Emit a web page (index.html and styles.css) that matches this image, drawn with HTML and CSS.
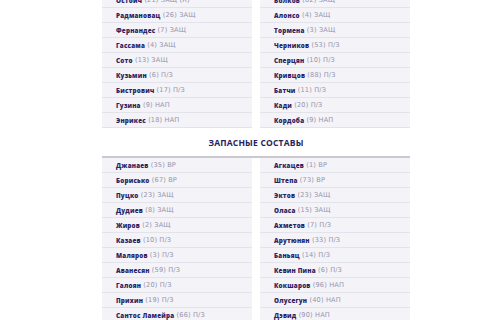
FILE: index.html
```html
<!DOCTYPE html>
<html lang="ru">
<head>
<meta charset="utf-8">
<link rel="stylesheet" href="styles.css">
</head>
<body>
<main class="page">
  <section class="cols">
    <ul class="col">
      <li class="row"><b>Остоич</b> (21) ЗАЩ (К)</li>
      <li class="row"><b>Радмановац</b> (26) ЗАЩ</li>
      <li class="row"><b>Фернандес</b> (7) ЗАЩ</li>
      <li class="row"><b>Гассама</b> (4) ЗАЩ</li>
      <li class="row"><b>Сото</b> (13) ЗАЩ</li>
      <li class="row"><b>Кузьмин</b> (6) П/З</li>
      <li class="row"><b>Бистрович</b> (17) П/З</li>
      <li class="row"><b>Гузина</b> (9) НАП</li>
      <li class="row"><b>Энрикес</b> (18) НАП</li>
    </ul>
    <ul class="col">
      <li class="row"><b>Волков</b> (82) ЗАЩ</li>
      <li class="row"><b>Алонсо</b> (4) ЗАЩ</li>
      <li class="row"><b>Тормена</b> (3) ЗАЩ</li>
      <li class="row"><b>Черников</b> (53) П/З</li>
      <li class="row"><b>Сперцян</b> (10) П/З</li>
      <li class="row"><b>Кривцов</b> (88) П/З</li>
      <li class="row"><b>Батчи</b> (11) П/З</li>
      <li class="row"><b>Кади</b> (20) П/З</li>
      <li class="row"><b>Кордоба</b> (9) НАП</li>
    </ul>
  </section>
  <h2 class="title">ЗАПАСНЫЕ СОСТАВЫ</h2>
  <section class="cols bench">
    <ul class="col">
      <li class="row"><b>Джанаев</b> (35) ВР</li>
      <li class="row"><b>Борисько</b> (67) ВР</li>
      <li class="row"><b>Пуцко</b> (23) ЗАЩ</li>
      <li class="row"><b>Дудиев</b> (8) ЗАЩ</li>
      <li class="row"><b>Жиров</b> (2) ЗАЩ</li>
      <li class="row"><b>Казаев</b> (10) П/З</li>
      <li class="row"><b>Маляров</b> (3) П/З</li>
      <li class="row"><b>Аванесян</b> (59) П/З</li>
      <li class="row"><b>Галоян</b> (20) П/З</li>
      <li class="row"><b>Прихин</b> (19) П/З</li>
      <li class="row"><b>Сантос Ламейра</b> (66) П/З</li>
    </ul>
    <ul class="col">
      <li class="row"><b>Агкацев</b> (1) ВР</li>
      <li class="row"><b>Штепа</b> (73) ВР</li>
      <li class="row"><b>Эктов</b> (23) ЗАЩ</li>
      <li class="row"><b>Оласа</b> (15) ЗАЩ</li>
      <li class="row"><b>Ахметов</b> (7) П/З</li>
      <li class="row"><b>Арутюнян</b> (33) П/З</li>
      <li class="row"><b>Баньяц</b> (14) П/З</li>
      <li class="row"><b>Кевин Пина</b> (6) П/З</li>
      <li class="row"><b>Кокшаров</b> (96) НАП</li>
      <li class="row"><b>Олусегун</b> (40) НАП</li>
      <li class="row"><b>Дэвид</b> (90) НАП</li>
    </ul>
  </section>
</main>
</body>
</html>
```
FILE: styles.css
```css
html, body {
  margin: 0;
  padding: 0;
  background: #ffffff;
}
body {
  font-family: "DejaVu Sans", "Noto Sans", sans-serif;
  overflow: hidden;
}
.page {
  width: 308px;
  margin: -7px 0 0 102px;
}
.cols {
  display: grid;
  grid-template-columns: 150px 150px;
  column-gap: 8px;
}
.col {
  list-style: none;
  margin: 0;
  padding: 0;
}
.row {
  height: 14px;
  border-bottom: 1px solid #e3e3eb;
  background: #f3f3f8;
  padding-left: 14px;
  display: flex;
  align-items: center;
  font-size: 6.6px;
  letter-spacing: 0.15px;
  color: #9593ad;
  white-space: pre;
}
.row b {
  font-family: "Open Sans", "Noto Sans", sans-serif;
  font-size: 6.3px;
  letter-spacing: 0.2px;
  color: #2b2462;
  font-weight: 800;
}
.title {
  margin: 0;
  padding: 10px 0 8px;
  height: 10px;
  line-height: 10px;
  text-align: center;
  font-family: "Open Sans", "Noto Sans", sans-serif;
  font-size: 8.5px;
  font-weight: 700;
  color: #27225e;
  letter-spacing: 0.2px;
}
.bench {
  border-top: 2px solid #c9c9cf;
}
```
